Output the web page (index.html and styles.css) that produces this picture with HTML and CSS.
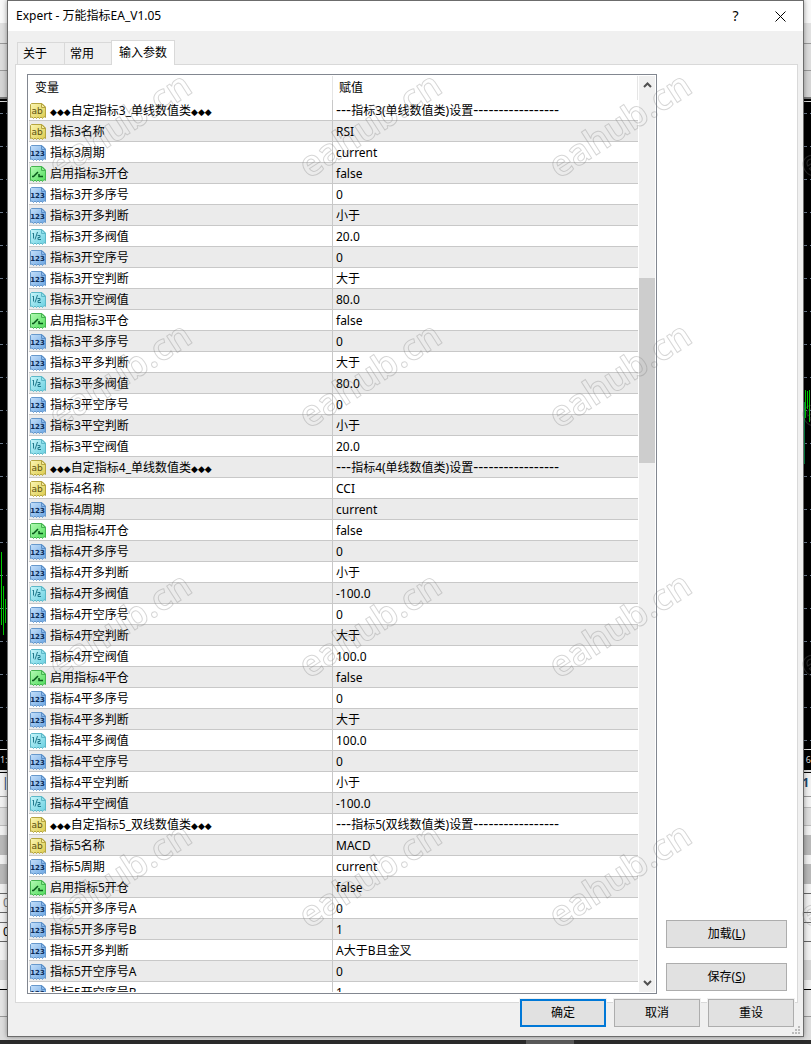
FILE: index.html
```
<!DOCTYPE html>
<html lang="zh-CN">
<head>
    <meta charset="UTF-8">
    <meta name="viewport" content="width=device-width, initial-scale=1.0">
    <title>Expert - 万能指标EA_V1.05</title>
    <link rel="stylesheet" href="styles.css">
</head>
<body>
    <!-- icon sprites -->
    <svg class="sprites" aria-hidden="true">
        <defs>
            <linearGradient id="gYellow" x1="0" y1="0" x2="1" y2="1"><stop offset="0" stop-color="#fbf6b4"/><stop offset="1" stop-color="#dccb4c"/></linearGradient>
            <linearGradient id="gBlue" x1="0" y1="0" x2="1" y2="1"><stop offset="0" stop-color="#c4dffa"/><stop offset="1" stop-color="#6aa5e2"/></linearGradient>
            <linearGradient id="gGreen" x1="0" y1="0" x2="1" y2="1"><stop offset="0" stop-color="#b4fbb4"/><stop offset="1" stop-color="#50dc5c"/></linearGradient>
            <linearGradient id="gCyan" x1="0" y1="0" x2="1" y2="1"><stop offset="0" stop-color="#c8f6fb"/><stop offset="1" stop-color="#68cfe0"/></linearGradient>
            <path id="sheet" d="M1.5.5H12l3.500 3.500V14.500L14 13.500l-1.500 2-1.500-1.500-1.500 1.500L8 14l-1.500 1.500L5 14l-1.500 1.500L2 14l-1.500.5V1.500z"/>
            <path id="fold" d="M11.500.5v4h4z"/>
        </defs>
        <symbol id="str" viewBox="0 0 16 16">
            <use href="#sheet" fill="url(#gYellow)" stroke="#b5a540"/><use href="#fold" fill="#f3eaa0" stroke="#b5a540"/>
            <text x="7" y="11" class="glyph glyph-ab" fill="#5c5210">ab</text>
        </symbol>
        <symbol id="int" viewBox="0 0 16 16">
            <use href="#sheet" fill="url(#gBlue)" stroke="#6698cc"/><use href="#fold" fill="#8fbcec" stroke="#5b8fc8"/>
            <text x="7.500" y="11" class="glyph glyph-123" fill="#0c2c58">123</text>
        </symbol>
        <symbol id="bool" viewBox="0 0 16 16">
            <use href="#sheet" fill="url(#gGreen)" stroke="#45b450"/><use href="#fold" fill="#8cec90" stroke="#45b450"/>
            <path d="M2 10.500h1.500L8 6M9 8v2.500h4" fill="none" stroke="#08581a" stroke-width="1.500"/>
        </symbol>
        <symbol id="dbl" viewBox="0 0 16 16">
            <use href="#sheet" fill="url(#gCyan)" stroke="#5cb8c8"/><use href="#fold" fill="#90e0ec" stroke="#5cb8c8"/>
            <path d="M2.500 5l1-1V9.500M7.500 3L5 10.500M7.500 6.500h2.500V8.500H8v2h3" fill="none" stroke="#21798c"/>
        </symbol>
    </svg>

    <!-- trading terminal behind the dialog -->
    <div class="terminal" aria-hidden="true">
        <div class="bar bar-title"></div>
        <div class="bar bar-menu"></div>
        <div class="bar bar-tools"></div>
        <div class="bar bar-tabs"></div>
        <div class="chart">
            <svg class="candles" width="8" height="90"><path d="M1.500 3v73M3.500 37v49M5.500 50v24" stroke="#0c0"/></svg>
            <svg class="candles candles-right" width="7" height="80"><path d="M.5 12v62" stroke="#084"/><path d="M1.500 0v28M3.500 1v18M5.500 0v32" stroke="#0c0"/></svg>
        </div>
        <div class="axis"><span>1:0</span><span>6</span></div>
        <div class="bar pane-tabs"><span>|</span><b>1</b></div>
        <div class="bar pane-gap"></div>
        <div class="bar pane-head"></div>
        <div class="bar pane-space"></div>
        <div class="bar pane-dark"></div>
        <div class="bar pane-space"></div>
        <div class="bar pane-dark"></div>
        <div class="bar pane-space"></div>
        <div class="bar pane-input pane-dim">0</div>
        <div class="bar pane-space"></div>
        <div class="bar pane-input">0</div>
        <div class="bar pane-fill"></div>
        <div class="bar pane-foot"></div>
        <div class="bar pane-space"></div>
        <div class="bar pane-log"></div>
        <div class="bar pane-status"></div>
        <div class="taskbar"><div class="task"></div></div>
    </div>

    <main class="dialog">
        <header class="titlebar">
            <h1>Expert - 万能指标EA_V1.05</h1>
            <button type="button" class="help" aria-label="帮助">?</button>
            <button type="button" class="close" aria-label="关闭">
                <svg width="11" height="11" viewBox="0 0 11 11"><path d="M.5.5l10 10M10.500.5l-10 10" stroke="#000"/></svg>
            </button>
        </header>

        <nav class="tabs">
            <button type="button" class="tab">关于</button>
            <button type="button" class="tab">常用</button>
            <button type="button" class="tab active">输入参数</button>
        </nav>

        <section class="panel">
            <div class="list">
                <div class="rows">
                    <table>
                        <thead>
                            <tr><th class="col-name">变量</th><th>赋值</th></tr>
                        </thead>
                        <tbody>
                            <tr><td><svg><use href="#str"/></svg><i>◆◆◆</i>自定指标3_单线数值类<i>◆◆◆</i></td><td><s>---</s>指标3(单线数值类)设置<s>-----------------</s></td></tr>
                            <tr><td><svg><use href="#str"/></svg>指标3名称</td><td>RSI</td></tr>
                            <tr><td><svg><use href="#int"/></svg>指标3周期</td><td>current</td></tr>
                            <tr><td><svg><use href="#bool"/></svg>启用指标3开仓</td><td>false</td></tr>
                            <tr><td><svg><use href="#int"/></svg>指标3开多序号</td><td>0</td></tr>
                            <tr><td><svg><use href="#int"/></svg>指标3开多判断</td><td>小于</td></tr>
                            <tr><td><svg><use href="#dbl"/></svg>指标3开多阀值</td><td>20.0</td></tr>
                            <tr><td><svg><use href="#int"/></svg>指标3开空序号</td><td>0</td></tr>
                            <tr><td><svg><use href="#int"/></svg>指标3开空判断</td><td>大于</td></tr>
                            <tr><td><svg><use href="#dbl"/></svg>指标3开空阀值</td><td>80.0</td></tr>
                            <tr><td><svg><use href="#bool"/></svg>启用指标3平仓</td><td>false</td></tr>
                            <tr><td><svg><use href="#int"/></svg>指标3平多序号</td><td>0</td></tr>
                            <tr><td><svg><use href="#int"/></svg>指标3平多判断</td><td>大于</td></tr>
                            <tr><td><svg><use href="#dbl"/></svg>指标3平多阀值</td><td>80.0</td></tr>
                            <tr><td><svg><use href="#int"/></svg>指标3平空序号</td><td>0</td></tr>
                            <tr><td><svg><use href="#int"/></svg>指标3平空判断</td><td>小于</td></tr>
                            <tr><td><svg><use href="#dbl"/></svg>指标3平空阀值</td><td>20.0</td></tr>
                            <tr><td><svg><use href="#str"/></svg><i>◆◆◆</i>自定指标4_单线数值类<i>◆◆◆</i></td><td><s>---</s>指标4(单线数值类)设置<s>-----------------</s></td></tr>
                            <tr><td><svg><use href="#str"/></svg>指标4名称</td><td>CCI</td></tr>
                            <tr><td><svg><use href="#int"/></svg>指标4周期</td><td>current</td></tr>
                            <tr><td><svg><use href="#bool"/></svg>启用指标4开仓</td><td>false</td></tr>
                            <tr><td><svg><use href="#int"/></svg>指标4开多序号</td><td>0</td></tr>
                            <tr><td><svg><use href="#int"/></svg>指标4开多判断</td><td>小于</td></tr>
                            <tr><td><svg><use href="#dbl"/></svg>指标4开多阀值</td><td>-100.0</td></tr>
                            <tr><td><svg><use href="#int"/></svg>指标4开空序号</td><td>0</td></tr>
                            <tr><td><svg><use href="#int"/></svg>指标4开空判断</td><td>大于</td></tr>
                            <tr><td><svg><use href="#dbl"/></svg>指标4开空阀值</td><td>100.0</td></tr>
                            <tr><td><svg><use href="#bool"/></svg>启用指标4平仓</td><td>false</td></tr>
                            <tr><td><svg><use href="#int"/></svg>指标4平多序号</td><td>0</td></tr>
                            <tr><td><svg><use href="#int"/></svg>指标4平多判断</td><td>大于</td></tr>
                            <tr><td><svg><use href="#dbl"/></svg>指标4平多阀值</td><td>100.0</td></tr>
                            <tr><td><svg><use href="#int"/></svg>指标4平空序号</td><td>0</td></tr>
                            <tr><td><svg><use href="#int"/></svg>指标4平空判断</td><td>小于</td></tr>
                            <tr><td><svg><use href="#dbl"/></svg>指标4平空阀值</td><td>-100.0</td></tr>
                            <tr><td><svg><use href="#str"/></svg><i>◆◆◆</i>自定指标5_双线数值类<i>◆◆◆</i></td><td><s>---</s>指标5(双线数值类)设置<s>-----------------</s></td></tr>
                            <tr><td><svg><use href="#str"/></svg>指标5名称</td><td>MACD</td></tr>
                            <tr><td><svg><use href="#int"/></svg>指标5周期</td><td>current</td></tr>
                            <tr><td><svg><use href="#bool"/></svg>启用指标5开仓</td><td>false</td></tr>
                            <tr><td><svg><use href="#int"/></svg>指标5开多序号A</td><td>0</td></tr>
                            <tr><td><svg><use href="#int"/></svg>指标5开多序号B</td><td>1</td></tr>
                            <tr><td><svg><use href="#int"/></svg>指标5开多判断</td><td>A大于B且金叉</td></tr>
                            <tr><td><svg><use href="#int"/></svg>指标5开空序号A</td><td>0</td></tr>
                            <tr><td><svg><use href="#int"/></svg>指标5开空序号B</td><td>1</td></tr>
                        </tbody>
                    </table>
                </div>
                <div class="scrollbar">
                    <svg width="9" height="6" viewBox="0 0 9 6"><path d="M1 5l3.500-3.500L8 5" fill="none" stroke="#505050" stroke-width="2"/></svg>
                    <div class="track"><div class="thumb"></div></div>
                    <svg width="9" height="6" viewBox="0 0 9 6"><path d="M1 1l3.500 3.500L8 1" fill="none" stroke="#505050" stroke-width="2"/></svg>
                </div>
            </div>
            <div class="side">
                <button type="button" class="btn">加载(<u>L</u>)</button>
                <button type="button" class="btn">保存(<u>S</u>)</button>
            </div>
        </section>

        <footer class="actions">
            <button type="button" class="btn primary">确定</button>
            <button type="button" class="btn">取消</button>
            <button type="button" class="btn">重设</button>
        </footer>
        <svg class="grip" width="8" height="8"><path d="M6 0h2v2H6zM3 3h2v2H3zM6 3h2v2H6zM0 6h2v2H0zM3 6h2v2H3zM6 6h2v2H6z" fill="#bbb"/></svg>
    </main>

    <svg class="watermark" aria-hidden="true">
        <defs>
            <pattern id="mark" x="-4" y="2" width="250" height="250" patternUnits="userSpaceOnUse">
                <text x="125" y="135" transform="rotate(-33 125 125)" text-anchor="middle">eahub.cn</text>
            </pattern>
        </defs>
        <rect width="100%" height="100%" fill="url(#mark)"/>
    </svg>
</body>
</html>
```
FILE: styles.css
```
* {
    box-sizing: border-box;
}

body {
    margin: 0;
    height: 100vh;
    display: grid;
    grid-template-columns: minmax(0, 1fr);
    grid-template-rows: minmax(0, 1fr);
    position: relative;
    overflow: hidden;
    background: #e8e8e8;
    color: #000;
    font-family: "Noto Sans", "Noto Sans CJK SC", sans-serif;
    font-size: 12px;
    line-height: 20px;
}

button {
    font: inherit;
    color: inherit;
    padding: 0;
    border: 0;
    background: none;
}

.sprites {
    position: absolute;
    width: 0;
    height: 0;
}

.glyph {
    text-anchor: middle;
    font-family: "DejaVu Sans", sans-serif;
}

.glyph-ab {
    font-size: 9px;
}

.glyph-123 {
    font-size: 7px;
    font-weight: bold;
}

/* terminal */
.terminal {
    grid-area: 1 / 1;
    display: flex;
    flex-direction: column;
    min-height: 0;
}

.bar {
    flex: none;
    background: #f0f0f0;
    overflow: hidden;
}

.bar-title {
    height: 23px;
    background: #f8f8f8;
}

.bar-menu {
    height: 21px;
    background: #e0e0e0;
    border-bottom: 1px solid #999;
}

.bar-tools {
    height: 27px;
    background: #dcdcdc;
    border-bottom: 1px solid #999;
}

.bar-tabs {
    height: 28px;
    background: #d4d4d4;
    border-bottom: 2px solid #777;
}

.chart {
    flex: 1;
    display: flex;
    justify-content: space-between;
    border-top: 2px solid #000;
    border-bottom: 1px solid #ddd;
    background:
        repeating-linear-gradient(90deg, transparent 0 3px, #000 3px 6px),
        repeating-linear-gradient(transparent 0 12px, #6c7a8c 12px 13px, transparent 13px 33px),
        #000;
    box-shadow: inset 0 1px #ddd;
}

.candles {
    margin-top: 448px;
}

.candles-right {
    margin-top: 289px;
}

.axis {
    height: 22px;
    display: flex;
    justify-content: space-between;
    background: #000;
    color: #ddd;
    font-size: 9px;
    border-bottom: 2px solid #ddd;
}

.pane-tabs {
    height: 25px;
    display: flex;
    justify-content: space-between;
    padding: 0 2px;
    border-top: 1px solid #000;
    border-bottom: 1px solid #999;
    color: #246;
}

.pane-gap {
    height: 11px;
    border-bottom: 1px solid #bbb;
}

.pane-head {
    height: 18px;
    background: #ddd;
    border-bottom: 1px solid #bbb;
}

.pane-space {
    height: 9px;
}

.pane-dark {
    height: 20px;
    background: #b8b8b8;
}

.pane-input {
    height: 20px;
    border: 1px solid #666;
    border-width: 1px 0;
    padding-left: 3px;
    line-height: 18px;
}

.pane-dim {
    color: #777;
}

.pane-fill {
    height: 18px;
}

.pane-foot {
    height: 20px;
    background: #d4d4d4;
}

.pane-log {
    height: 28px;
    border-top: 1px solid #000;
    border-bottom: 1px solid #999;
    background: #e4e4e4;
}

.pane-status {
    height: 23px;
    background: #ddd;
}

.taskbar {
    flex: none;
    height: 4px;
    display: flex;
    justify-content: center;
    background: #2b2b2b;
}

.task {
    width: 48px;
    margin-left: 288px;
    background: #5a5a5a;
}

/* dialog */
.dialog {
    grid-area: 1 / 1;
    position: relative;
    display: flex;
    flex-direction: column;
    min-height: 0;
    margin: 0 7px 7px;
    border: 1px solid #6c6c6c;
    background: #f0f0f0;
    box-shadow: 0 0 5px rgba(0, 0, 0, 0.4);
}

.titlebar {
    flex: none;
    display: flex;
    align-items: center;
    height: 30px;
    padding-left: 8px;
    background: #fff;
}

.titlebar h1 {
    flex: 1;
    margin: 0;
    font-size: 12px;
    font-weight: normal;
}

.help,
.close {
    width: 45px;
    height: 30px;
    font-size: 14px;
}

.close svg {
    display: block;
    margin: 0 auto;
}

.tabs {
    flex: none;
    display: flex;
    align-items: flex-end;
    height: 33px;
    padding-left: 9px;
}

.tab {
    width: 47px;
    height: 22px;
    padding: 0 0 0 5px;
    border: 1px solid #d9d9d9;
    border-width: 1px 0 0 1px;
    text-align: left;
    white-space: nowrap;
}

.tab.active {
    position: relative;
    width: 64px;
    height: 25px;
    margin-bottom: -1px;
    padding-left: 7px;
    border-width: 1px 1px 0;
    background: #fff;
}

.panel {
    flex: 1;
    min-height: 0;
    display: flex;
    gap: 9px;
    margin: 0 5px 0 7px;
    padding: 9px 10px 8px 11px;
    border: 1px solid #d9d9d9;
    background: #fff;
}

.list {
    flex: 1;
    min-width: 0;
    display: flex;
    gap: 1px;
    padding: 1px;
    border: 1px solid #828790;
}

.rows {
    flex: 1;
    min-width: 0;
    overflow: hidden;
}

table {
    width: 100%;
    table-layout: fixed;
    border-spacing: 0;
}

th,
td {
    height: 21px;
    padding: 2px 3px 0 1px;
    border-bottom: 1px solid #c8c8c8;
    line-height: 18px;
    text-align: left;
    font-weight: normal;
    white-space: nowrap;
}

th {
    height: 24px;
    padding: 0 6px;
    border-right: 1px solid #e5e5e5;
    border-bottom: 0;
}

.col-name {
    width: 304px;
}

td:first-child {
    border-right: 1px solid #c8c8c8;
}

td:last-child {
    padding-left: 3px;
}

tbody tr:nth-child(even) {
    background: #ebebeb;
}

td svg {
    float: left;
    width: 16px;
    height: 16px;
    margin: 1px 4px 0 0;
}

/* diamonds and dashes of the group rows */
td i,
td s {
    font-family: "DejaVu Sans", sans-serif;
    font-style: normal;
    line-height: 1;
    text-decoration: none;
}

td i {
    font-size: 9px;
}

td s {
    font-size: 14px;
}

.scrollbar {
    flex: none;
    width: 16px;
    display: flex;
    flex-direction: column;
    align-items: center;
    padding: 6px 0;
    background: #f0f0f0;
}

.track {
    flex: 1;
    align-self: stretch;
    margin: 6px 0;
}

.thumb {
    height: 21%;
    margin-top: 184px;
    background: #cdcdcd;
}

.side {
    flex: none;
    width: 121px;
    display: flex;
    flex-direction: column;
    justify-content: flex-end;
    gap: 15px;
    padding-bottom: 3px;
}

.btn {
    height: 28px;
    border: 1px solid #adadad;
    background: #e1e1e1;
}

.btn.primary {
    border: 2px solid #0078d7;
}

.actions {
    flex: none;
    display: flex;
    justify-content: flex-end;
    gap: 8px;
    margin-top: -4px;
    padding: 0 9px 9px;
}

.actions .btn {
    width: 86px;
    outline: 1px solid #f0f0f0;
}

.grip {
    position: absolute;
    right: 3px;
    bottom: 2px;
}

.watermark {
    position: absolute;
    inset: 0;
    width: 100%;
    height: 100%;
    pointer-events: none;
}

.watermark text {
    fill: none;
    stroke: rgba(120, 120, 120, 0.3);
    font-family: "Noto Sans", sans-serif;
    font-size: 36px;
    font-weight: 600;
}
```
